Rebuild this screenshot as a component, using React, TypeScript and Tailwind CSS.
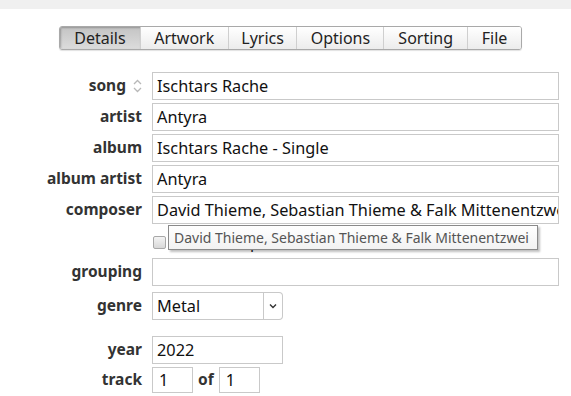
import React from "react";

const font = { fontFamily: '"Noto Sans", "Open Sans", sans-serif' };

function Label({ children }: { children: React.ReactNode }) {
  return (
    <div className="w-[142px] shrink-0 text-right text-[15.5px] font-bold leading-none text-[#333]">
      {children}
    </div>
  );
}

function Field({ value, w = "w-[407px]" }: { value?: string; w?: string }) {
  return (
    <div
      className={`${w} h-[28px] shrink-0 overflow-hidden whitespace-nowrap border border-[#c9c9c9] bg-white pl-[4px] text-[16.3px] leading-[26px] text-[#111]`}
    >
      {value}
    </div>
  );
}

function Row({
  label,
  children,
  className = "",
}: {
  label: React.ReactNode;
  children: React.ReactNode;
  className?: string;
}) {
  return (
    <div className={`flex items-center gap-[10px] ${className}`}>
      <Label>{label}</Label>
      {children}
    </div>
  );
}

const tabs = [
  { name: "Details", w: "w-[80px]" },
  { name: "Artwork", w: "w-[88px]" },
  { name: "Lyrics", w: "w-[69px]" },
  { name: "Options", w: "w-[87px]" },
  { name: "Sorting", w: "w-[84px]" },
  { name: "File", w: "w-[54px]" },
];

export default function App() {
  return (
    <div className="relative h-[396px] w-[571px] overflow-hidden bg-white" style={font}>
      <div className="h-[9px] bg-[#f0f0f0]" />
      <div className="ml-[59px] mt-[17px] flex h-[24px] w-[463px] overflow-hidden rounded-[3px] border border-[#a9a9a9] shadow-[0_1px_1px_rgba(0,0,0,0.12)]">
        {tabs.map((t, i) => (
          <div
            key={t.name}
            className={`${t.w} flex items-center justify-center text-[16px] leading-none ${
              i === 0
                ? "bg-gradient-to-b from-[#c4c4c4] to-[#dcdcdc] text-[#222] shadow-[inset_1px_1px_2px_rgba(0,0,0,0.25)]"
                : "border-l border-[#cfcfcf] bg-gradient-to-b from-[#ffffff] to-[#ececec] text-[#222]"
            }`}
          >
            {t.name}
          </div>
        ))}
      </div>

      <div className="mt-[22px] flex flex-col">
        <Row
          label={
            <span className="inline-flex items-center justify-end gap-[7px]">
              song
              <svg width="9" height="14" viewBox="0 0 9 14" fill="none" stroke="#b8b8b8" strokeWidth="1.3">
                <path d="M1 5 L4.5 1.5 L8 5" />
                <path d="M1 9 L4.5 12.5 L8 9" />
              </svg>
            </span>
          }
        >
          <Field value="Ischtars Rache" />
        </Row>
        <Row label="artist" className="mt-[3px]">
          <Field value="Antyra" />
        </Row>
        <Row label="album" className="mt-[3px]">
          <Field value="Ischtars Rache - Single" />
        </Row>
        <Row label="album artist" className="mt-[3px]">
          <Field value="Antyra" />
        </Row>
        <Row label="composer" className="mt-[3px]">
          <Field value="David Thieme, Sebastian Thieme & Falk Mittenentzwei" />
        </Row>
        <div className="mt-[3px] flex h-[28px] items-center gap-[10px]">
          <div className="w-[142px] shrink-0" />
          <div className="ml-[1px] mt-[2px] flex items-center gap-[7px]">
            <div className="h-[13px] w-[13px] rounded-[2px] border border-[#a8a8a8] bg-gradient-to-b from-[#f4f4f4] to-[#d8d8d8]" />
            <span className="text-[16px] leading-none text-[#222]">Show composer in all views</span>
          </div>
        </div>
        <Row label="grouping" className="mt-[3px]">
          <Field />
        </Row>
        <Row label="genre" className="mt-[6px]">
          <div className="flex h-[28px] items-stretch">
            <Field value="Metal" w="w-[112px]" />
            <div className="flex w-[19px] items-center justify-center rounded-r-[4px] border border-l-0 border-[#c9c9c9] bg-white">
              <svg width="8" height="6" viewBox="0 0 8 6" fill="none" stroke="#333" strokeWidth="1.4">
                <path d="M1 1.5 L4 4.5 L7 1.5" />
              </svg>
            </div>
          </div>
        </Row>
        <Row label="year" className="mt-[16px]">
          <Field value="2022" w="w-[131px]" />
        </Row>
        <Row label="track" className="mt-[3px]">
          <div className="flex items-center">
            <div className="h-[26px] w-[41px] border border-[#c9c9c9] pl-[6px] text-[16.3px] leading-[24px] text-[#111]">1</div>
            <span className="ml-[5px] mr-[5px] text-[15.5px] font-bold text-[#333]">of</span>
            <div className="h-[26px] w-[41px] border border-[#c9c9c9] pl-[6px] text-[16.3px] leading-[24px] text-[#111]">1</div>
          </div>
        </Row>
      </div>

      <div className="absolute left-[168px] top-[225px] flex h-[25px] w-[370px] items-center overflow-hidden whitespace-nowrap border border-[#8a8a8a] bg-gradient-to-b from-[#ffffff] to-[#f2f2f2] pl-[5px] text-[14px] leading-none text-[#555] shadow-[2px_2px_2px_rgba(0,0,0,0.25)]">
        David Thieme, Sebastian Thieme &amp; Falk Mittenentzwei
      </div>
    </div>
  );
}
